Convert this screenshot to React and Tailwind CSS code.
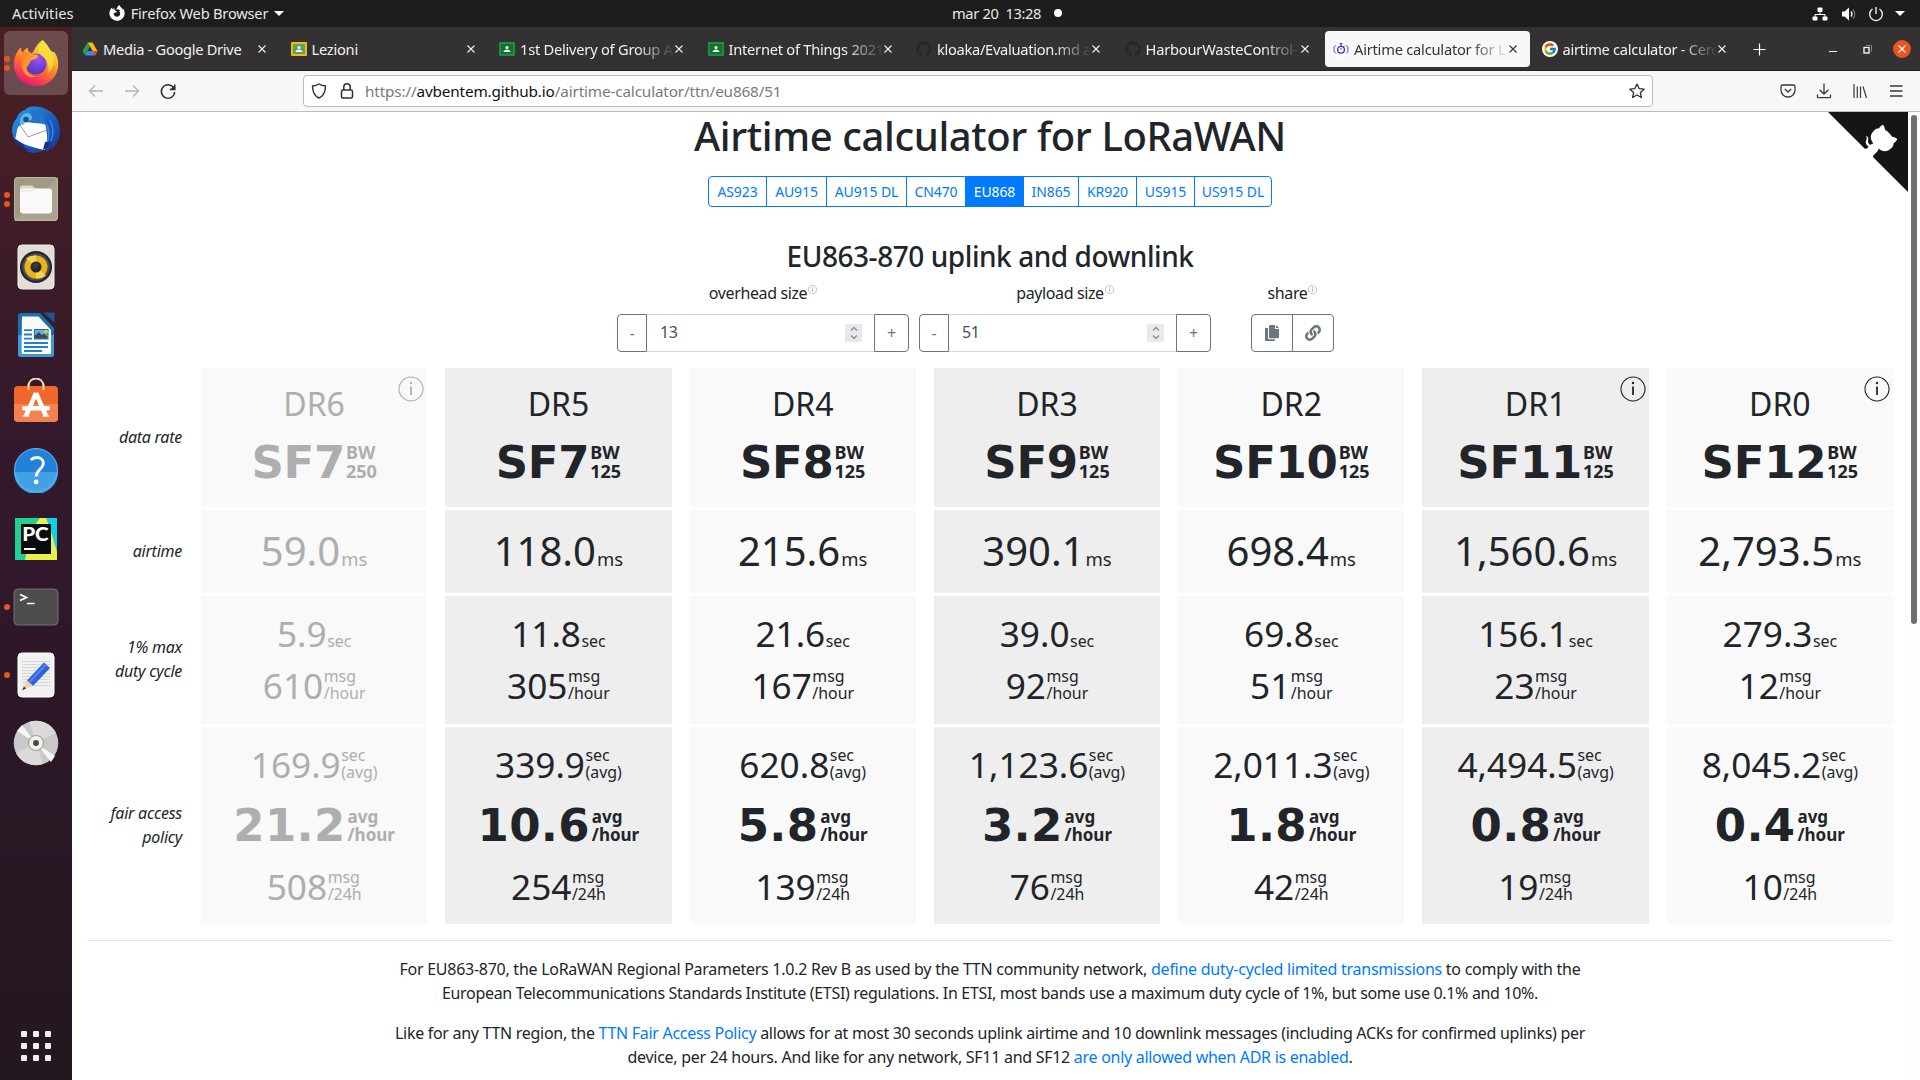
import React from 'react';
import { FcGoogle } from 'react-icons/fc';
import { FaGithub, FaFirefoxBrowser, FaLink } from 'react-icons/fa';

/* ---------- dock icons ---------- */

const FirefoxIcon = () => (
  <svg width="46" height="46" viewBox="0 0 46 46">
    <defs>
      <linearGradient id="ffBody" x1="0.8" y1="0" x2="0.3" y2="1">
        <stop offset="0" stopColor="#fff04a" />
        <stop offset="0.35" stopColor="#ffb524" />
        <stop offset="0.62" stopColor="#ff6a33" />
        <stop offset="1" stopColor="#e8107c" />
      </linearGradient>
      <radialGradient id="ffGlobe" cx="0.6" cy="0.25" r="0.8">
        <stop offset="0" stopColor="#a850f0" />
        <stop offset="0.6" stopColor="#6a3fd8" />
        <stop offset="1" stopColor="#4b3bb0" />
      </radialGradient>
      <linearGradient id="ffHead" x1="0" y1="0" x2="1" y2="0.6">
        <stop offset="0" stopColor="#ff7a2a" />
        <stop offset="1" stopColor="#ffb52e" />
      </linearGradient>
    </defs>
    <path d="M29.500 0C34 4 36 8 37.500 10.500 40 12 40.500 13 41.500 12c3 5 4 9 3.700 13.500C44.500 37.500 35 46 23.500 46 10.500 46 .8 36.500.8 24.500.8 17.500 3.500 11.500 8 7.500c0 2.200.5 3.800 1.500 5.300 1.500-2.500 3-4 5-5.300.3 3 1.200 5 3.500 6.500C22 12 21 6 29.500 0z" fill="url(#ffBody)" />
    <circle cx="23" cy="24" r="10.500" fill="url(#ffGlobe)" />
    <path d="M29.500 0C34 4 36 8 37.500 10.500 43 18 41 28 35 33c2-7-1-14-6-17-6-4-3-11 .5-16z" fill="#ffe23c" opacity="0.75" />
    <path d="M9 13c4-2.500 8-1.500 11 1.500 3-.5 5 .5 5 2-1 2.500-5 3-7 4-2 2-1 4-3.500 5.500-3 5 2 10 8.500 10.500C13 39 6 31 9 13z" fill="url(#ffHead)" />
  </svg>
);

const ThunderbirdIcon = () => (
  <svg width="50" height="50" viewBox="0 0 50 50">
    <defs>
      <linearGradient id="tbBody" x1="0" y1="0" x2="1" y2="1">
        <stop offset="0" stopColor="#2aa0ea" />
        <stop offset="0.5" stopColor="#1c62c4" />
        <stop offset="1" stopColor="#1b2f90" />
      </linearGradient>
    </defs>
    <path d="M14 4c2-2.500 5-3.500 8-3.500C38 0 49 11 49 25c0 9-5 16-9 19l1-4-6 7 .5-4C30 47 22 48 15 45l4-1C7 42 1 33 1 24c0-5 2-9 5-12 1-4 4-7 8-8z" fill="url(#tbBody)" />
    <path d="M13 16l22 2c-1 4 2 10 1 16l-2 10C24 42 10 38 4 33c2-4 1-8 3-12z" fill="#fff" />
    <path d="M9 19l8 12 19-7" fill="none" stroke="#9a9a9a" strokeWidth="1" />
    <path d="M9 18c-1-6 3-11 8-11 3 0 5 2 5 4 0 4-7 3-10 8z" fill="#5fb9ea" />
    <path d="M17 6c7-3 14 1 17 9l2 6-3-3c-5-2-9-2-13-2 2-4 1-7-3-10z" fill="#2473cc" />
    <circle cx="15" cy="13.500" r="2.800" fill="#1c4f7a" />
    <path d="M35 18c4 6 3 14 1 20M39 14c4 8 3 16 1 21" fill="none" stroke="#2b8fe0" strokeWidth="1.500" />
    <path d="M3 32c2 6 8 11 15 13-3-2-5-4-6-7z" fill="#1e2b86" />
    <path d="M34 36l-2 8c3-1 6-4 7-8z" fill="#1e2b86" />
  </svg>
);

const FilesIcon = () => (
  <svg width="46" height="46" viewBox="0 0 46 46">
    <rect x="1" y="1" width="44" height="44" rx="4" fill="#a09983" />
    <path d="M1 45L45 1v40a4 4 0 0 1-4 4z" fill="#aaa48f" />
    <rect x="1.500" y="1.500" width="43" height="43" rx="4" fill="none" stroke="#bdb8a6" />
    <path d="M7 12a2.500 2.500 0 0 1 2.500-2.500H19l4 3.500v5H7z" fill="#dcd9cc" />
    <rect x="7" y="12.500" width="32" height="25" rx="3" fill="#faf9f7" />
    <path d="M7 15h10c3 0 4-2.500 7-2.500" fill="none" stroke="#e4e1d6" strokeWidth="1" />
  </svg>
);

const RhythmboxIcon = () => (
  <svg width="38" height="46" viewBox="0 0 38 46">
    <rect x="1" y="1" width="36" height="44" rx="4" fill="#e2ded5" stroke="#f2efe9" />
    <circle cx="19" cy="23" r="16" fill="#23252e" />
    <circle cx="19" cy="23" r="13.800" fill="#494d5a" />
    <circle cx="19" cy="23" r="11.500" fill="#e8b417" />
    <path d="M19 23L9 14.500A13 13 0 0 1 19 11.500z" fill="#f7d548" />
    <path d="M19 23l10 8.500A13 13 0 0 1 19 34.500z" fill="#f7d548" />
    <circle cx="19" cy="23" r="5.500" fill="#26262a" />
    <circle cx="18.500" cy="21.500" r="3" fill="#3a3a3e" />
  </svg>
);

const WriterIcon = () => (
  <svg width="38" height="46" viewBox="0 0 38 46">
    <path d="M4 1h19l14 15v26a3 3 0 0 1-3 3H4a3 3 0 0 1-3-3V4a3 3 0 0 1 3-3z" fill="#1a6fae" />
    <path d="M1 23h36v19a3 3 0 0 1-3 3H4a3 3 0 0 1-3-3z" fill="#3c9bd6" />
    <path d="M5 4.500h16.500L34 18v22.500a1.500 1.500 0 0 1-1.500 1.500h-26A2 2 0 0 1 4.500 40z" fill="#fafafa" />
    <path d="M26 .5h11.500v10z" fill="#155a92" />
    <path d="M7 18.200h8M7 22.500h8M7 26.700h8M7 31h24M7 35h24M7 39h18" stroke="#2382c4" strokeWidth="1.800" />
    <rect x="17.500" y="17.500" width="13.500" height="9.500" fill="#5cb0e4" stroke="#1a6fae" />
    <path d="M18 26.500v-3l4-3.500 3 3 2-1.500 3.500 3v2z" fill="#44484c" />
    <circle cx="29" cy="19.500" r="1.800" fill="#f2d21c" />
  </svg>
);

const SoftwareIcon = () => (
  <svg className="-mt-0.5" width="46" height="48" viewBox="0 0 46 48">
    <path d="M15.500 14V8a7.500 7.500 0 0 1 15 0v6" fill="none" stroke="#f3dcb4" strokeWidth="1.800" />
    <rect x="1" y="8" width="44" height="36" rx="4" fill="#f0672c" />
    <path d="M1 26h44v14a4 4 0 0 1-4 4H5a4 4 0 0 1-4-4z" fill="#f48150" />
    <path d="M15.500 6v6M30.500 6v6" stroke="#f3dcb4" strokeWidth="1.800" />
    <path d="M23 15L13 38M23 15l10 23" stroke="#fff" strokeWidth="4.500" />
    <rect x="9" y="28" width="28" height="4.500" rx="2" fill="#fff" />
    <path d="M10 38h6M30 38h6" stroke="#fff" strokeWidth="1.500" />
  </svg>
);

const HelpIcon = () => (
  <svg className="-mt-0.5" width="46" height="46" viewBox="0 0 46 46">
    <circle cx="23" cy="23" r="22" fill="#2382d8" />
    <path d="M1 25a22 22 0 0 0 44 0z" fill="#42a0e6" />
    <circle cx="23" cy="23" r="21.500" fill="none" stroke="#6cbaf0" strokeWidth="0.800" />
    <path d="M17.800 13c1.800-1.800 3.800-2.500 6-2.500 4 0 6.500 2.500 6.500 5.800 0 6-7 6.200-7 12.700v.5" fill="none" stroke="#fff" strokeWidth="2.800" />
    <circle cx="23.200" cy="35" r="2.400" fill="#fff" />
  </svg>
);

const PyCharmIcon = () => (
  <svg width="42" height="42" viewBox="0 0 42 42">
    <rect width="42" height="42" fill="#23d18e" />
    <path d="M21 0h21v28z" fill="#12cfe4" />
    <path d="M25 0h6l11 28v14H10l6-30z" fill="#e8f04a" />
    <path d="M32 0h10v34z" fill="#12cfe4" />
    <path d="M0 28l10 14H0z" fill="#1fd0a0" />
    <rect x="6" y="6" width="30" height="30" fill="#0b0b0b" />
    <text x="7.200" y="23" fontFamily="Lato, sans-serif" fontWeight="900" fontSize="18" textLength="26.500" lengthAdjust="spacingAndGlyphs" fill="#fff">PC</text>
    <rect x="9" y="30" width="11.500" height="2" fill="#fff" />
  </svg>
);

const TerminalIcon = () => (
  <svg width="46" height="38" viewBox="0 0 46 38">
    <rect x="1" y="1" width="44" height="36" rx="4" fill="#4d4d4d" stroke="#737373" />
    <path d="M7 6.500l6.500 3L7 12.500" fill="none" stroke="#fff" strokeWidth="1.700" />
    <path d="M14 15.500h7.500" stroke="#fff" strokeWidth="1.500" />
  </svg>
);

const EditorIcon = () => (
  <svg width="38" height="46" viewBox="0 0 38 46">
    <rect x="1" y="1" width="36" height="44" rx="4" fill="#f1f1f1" stroke="#fff" />
    <path d="M5 9.500h28M5 12.500h28M5 15.500h28M5 18.500h28M5 21.500h28M5 24.500h28M5 27.500h28M5 30.500h28M5 33.500h28" stroke="#cfcfcf" strokeWidth="0.800" />
    <path d="M27 10.500l6 5.500L16 34l-6-5.500z" fill="#2f62d8" />
    <path d="M29 12.500L12 30.500" stroke="#5584ec" strokeWidth="2" />
    <path d="M10 28.500l6 5.500-10.500 4z" fill="#f5cfa6" />
    <path d="M7 34.500l2 2-4 1.800z" fill="#333" />
  </svg>
);

const DiscIcon = () => (
  <svg width="46" height="46" viewBox="0 0 46 46">
    <circle cx="23" cy="23" r="22.300" fill="#c9c9c9" />
    <path d="M23 23L16 2A22 22 0 0 1 43 13zM23 23l7 21A22 22 0 0 1 3 33z" fill="#dadada" />
    <path d="M23 23L4 11l5-6zM23 23l19 13-4 6z" fill="#f6f6f6" />
    <circle cx="23" cy="23" r="7.500" fill="#f3f1ea" stroke="#a9a38f" strokeWidth="1.200" />
    <circle cx="23" cy="23" r="3" fill="#4a4a4a" />
  </svg>
);

const dock = [
  { I: FirefoxIcon, dots: 2, active: true },
  { I: ThunderbirdIcon, dots: 0 },
  { I: FilesIcon, dots: 2 },
  { I: RhythmboxIcon, dots: 0 },
  { I: WriterIcon, dots: 0 },
  { I: SoftwareIcon, dots: 0 },
  { I: HelpIcon, dots: 0 },
  { I: PyCharmIcon, dots: 0 },
  { I: TerminalIcon, dots: 1 },
  { I: EditorIcon, dots: 1 },
  { I: DiscIcon, dots: 0 },
];

function Dock() {
  return (
    <div className="flex w-[72px] shrink-0 flex-col bg-linear-to-b from-[#4a2023] via-[#33182c] via-40% to-[#231720] pt-1">
      <div className="flex flex-col gap-1">
        {dock.map(({ I, dots, active }, i) => (
          <div key={i} className="relative flex h-16 items-center justify-center">
            <div className={active ? 'flex size-16 items-center justify-center rounded-md bg-white/20' : 'flex size-16 items-center justify-center'}>
              <I />
            </div>
            <div className="absolute top-0 left-1 flex h-16 flex-col justify-center gap-[3px]">
              {Array.from({ length: dots }, (_, d) => (
                <span key={d} className="size-[6px] rounded-full bg-[#e95420]" />
              ))}
            </div>
          </div>
        ))}
      </div>
      <div className="mt-auto mb-[19px] ml-[21px] grid w-[30px] grid-cols-3 gap-[6px]">
        {Array.from({ length: 9 }, (_, i) => (
          <span key={i} className="size-[6px] rounded-[1px] bg-[#efeeec]" />
        ))}
      </div>
    </div>
  );
}

/* ---------- GNOME top bar ---------- */

function TopBar() {
  return (
    <div className="grid h-[27px] shrink-0 grid-cols-3 items-center bg-[#1d1d1d] text-[14.67px] tracking-[-0.22px] text-[#e8e8e8]">
      <div className="-mt-px flex items-center pl-3">
        <span className="tracking-[0.06px]">Activities</span>
        <FaFirefoxBrowser className="ml-[35px] text-white" size={16} />
        <span className="ml-[6px]">Firefox Web Browser</span>
        <span className="ml-[6px] border-x-[5px] border-t-[5px] border-x-transparent border-t-white" />
      </div>
      <div className="-mt-0.5 flex items-center pl-[312px] whitespace-pre">
        <span className="tracking-[-0.35px]">mar 20  13:28</span>
        <span className="ml-[13px] size-2 rounded-full bg-white" />
      </div>
      <div className="flex items-center justify-end pr-[15px]">
        <svg width="16" height="16" viewBox="0 0 16 16" fill="#fff">
          <rect x="5.500" y="1.500" width="5" height="4.500" rx="1" />
          <rect x="0.500" y="10.500" width="5" height="4" rx="1" />
          <rect x="10.500" y="10.500" width="5" height="4" rx="1" />
          <path d="M8 5v3.500M3 11V8.500h10V11" stroke="#fff" fill="none" />
        </svg>
        <svg className="ml-[13px]" width="16" height="16" viewBox="0 0 16 16">
          <path d="M1 5.500h2.500L8 1.500v13l-4.500-4H1z" fill="#fff" />
          <path d="M10 5.500a4 4 0 0 1 0 5" fill="none" stroke="#fff" strokeWidth="1.300" />
          <path d="M12 3.500a6.500 6.500 0 0 1 0 9" fill="none" stroke="#777" strokeWidth="1.200" />
        </svg>
        <svg className="ml-[11px]" width="16" height="16" viewBox="0 0 16 16" fill="none" stroke="#fff" strokeWidth="1.300">
          <path d="M4.500 3a6.300 6.300 0 1 0 7 0M8 1v7" />
        </svg>
        <span className="ml-[11px] border-x-[5px] border-t-[5px] border-x-transparent border-t-white" />
      </div>
    </div>
  );
}

/* ---------- Firefox chrome ---------- */

const DriveIcon = () => (
  <svg width="16" height="16" viewBox="0 0 16 16">
    <path d="M5.500 1.500h5l5 8.500h-5z" fill="#fbbc05" />
    <path d="M5.500 10h10L13 14.500H3z" fill="#4285f4" />
    <path d="M15.500 10L13 14.500 10.500 10z" fill="#ea4335" />
    <path d="M5.500 1.500L8 5.800 3 14.500.5 10z" fill="#1ea352" />
    <path d="M5.600 10L8 5.800l2.500 4.200z" fill="#333131" />
  </svg>
);

function ClassroomIcon({ frame, board }) {
  return (
    <svg width="16" height="16" viewBox="0 0 16 16">
      <rect y="1" width="16" height="14" rx="1" fill={frame} />
      <rect x="2" y="3" width="12" height="10" fill={board} />
      <circle cx="8" cy="6.500" r="1.500" fill="#fff" />
      <path d="M4.500 11c.3-2 2-2.300 3.500-2.300s3.200.3 3.500 2.300z" fill="#fff" />
    </svg>
  );
}

const LoraIcon = () => (
  <span className="flex size-4 items-center justify-center rounded-full bg-white">
    <svg width="16" height="16" viewBox="0 0 16 16" fill="none" stroke="#2b2bd8">
      <circle cx="8" cy="8.700" r="3.400" strokeWidth="1.300" />
      <path d="M8 5.500V3M6.500 2.700h3M8 8.700V7M10.800 5.500l.8-.8" />
      <path d="M3 4a6 6 0 0 0 0 8.500M13 4a6 6 0 0 1 0 8.500" opacity="0.600" />
      <path d="M1.200 4.500a8 8 0 0 0 0 7.500M14.800 4.500a8 8 0 0 1 0 7.500" opacity="0.350" />
    </svg>
  </span>
);

const GoogleIcon = () => (
  <span className="flex size-4 items-center justify-center rounded-full bg-white">
    <FcGoogle size={14} />
  </span>
);

const GitHubTabIcon = () => <FaGithub size={16} color="#24292e" />;

const tabs = [
  { I: DriveIcon, t: 'Media - Google Drive', k: 'tracking-[-0.300px]' },
  { I: () => <ClassroomIcon frame="#f5b912" board="#57a360" />, t: 'Lezioni', k: 'tracking-[-0.250px]' },
  { I: () => <ClassroomIcon frame="#1d8f42" board="#13722f" />, t: '1st Delivery of Group A', k: 'tracking-[-0.240px]', fade: true },
  { I: () => <ClassroomIcon frame="#1d8f42" board="#13722f" />, t: 'Internet of Things 2021', k: 'tracking-[-0.250px]', fade: true },
  { I: GitHubTabIcon, t: 'kloaka/Evaluation.md a', k: 'tracking-[-0.300px]', fade: true },
  { I: GitHubTabIcon, t: 'HarbourWasteControl-', k: 'tracking-[-0.200px]', fade: true },
  { I: LoraIcon, t: 'Airtime calculator for L', k: 'tracking-[-0.220px]', fade: true, active: true },
  { I: GoogleIcon, t: 'airtime calculator - Cerc', k: 'tracking-[-0.300px]', fade: true },
];

const CloseX = () => (
  <svg className="shrink-0" width="8" height="8" viewBox="0 0 8 8" fill="none" stroke="currentColor" strokeWidth="1.100">
    <path d="M.5.5l7 7M7.500.5l-7 7" />
  </svg>
);

function TabBar() {
  return (
    <div className="flex h-11 shrink-0 border-b border-[#221f20] bg-[#333131] pt-1 pl-[2px] text-[14.67px] text-[#f2f2f2]">
      <div className="flex gap-1">
        {tabs.map(({ I, t, k, fade, active }, i) => (
          <div
            key={i}
            className={
              active
                ? 'flex h-9 w-[204.500px] items-center rounded bg-[#f8f8f8] pl-2 text-[#333333]'
                : 'flex h-9 w-[204.500px] items-center pl-2'
            }
          >
            <span className="size-4 shrink-0"><I /></span>
            <span
              className={
                fade
                  ? 'ml-[5px] w-[155px] overflow-hidden mask-r-from-75% mask-r-to-100% leading-9 whitespace-nowrap'
                  : 'ml-[5px] w-[155px] overflow-hidden leading-9 whitespace-nowrap'
              }
            >
              <span className={k}>{t}</span>
            </span>
            <CloseX />
          </div>
        ))}
      </div>
      <div className="ml-[15px] flex h-9 flex-1 items-center">
        <svg width="13" height="13" viewBox="0 0 13 13" stroke="#fff" strokeWidth="1.200">
          <path d="M6.500.5v12M.5 6.500h12" />
        </svg>
        <span className="mt-1 ml-[63px] h-px w-2 bg-white" />
        <svg className="ml-[26px]" width="9" height="9" viewBox="0 0 9 9" fill="none" stroke="#fff">
          <rect x="1" y="2.500" width="5" height="5.500" strokeWidth="1.300" />
          <path d="M3 .5h5.500v6" stroke="#9a9a9a" strokeWidth="0.800" />
        </svg>
        <span className="ml-[21px] flex size-[18px] items-center justify-center rounded-full bg-[#e95420] text-white">
          <CloseX />
        </span>
      </div>
    </div>
  );
}

function Arrow({ flip }) {
  return (
    <svg className={flip ? '-scale-x-100' : ''} width="16" height="16" viewBox="0 0 16 16" fill="none" stroke="#b4b4b4" strokeWidth="1.300">
      <path d="M15 8H1.500M7 2.500L1.500 8 7 13.500" />
    </svg>
  );
}

function Toolbar() {
  return (
    <div className="flex h-[41px] shrink-0 items-center border-b border-[#bcbcbc] bg-[#f7f7f7] pl-4 text-[#3a3a3a]">
      <Arrow />
      <span className="ml-5"><Arrow flip /></span>
      <svg className="ml-[19px]" width="18" height="18" viewBox="0 0 18 18" fill="none" stroke="#303030" strokeWidth="1.500">
        <path d="M15.300 7.200A6.700 6.700 0 1 0 15.700 10M15.800 2.500v5h-5" />
        <path d="M15.800 3v4.500h-4.500z" fill="#303030" stroke="none" />
      </svg>
      <div className="ml-[126px] flex h-8 w-[1350px] items-center rounded border border-[#bdbdbd] bg-white pr-[7px] pl-[7px]">
        <svg width="16" height="16" viewBox="0 0 16 16" fill="none" stroke="#303030" strokeWidth="1.400">
          <path d="M8 1c2 1.300 4 1.900 6.500 2 0 5.500-1 9.500-6.500 12C2.500 12.500 1.500 8.500 1.500 3 4 2.900 6 2.300 8 1z" />
        </svg>
        <svg className="ml-3" width="16" height="16" viewBox="0 0 16 16" fill="none" stroke="#303030" strokeWidth="1.500">
          <rect x="2.500" y="7" width="11" height="8" rx="1.500" />
          <path d="M4.800 7V4a3.200 3.200 0 0 1 6.400 0v3" />
        </svg>
        <span className="ml-[10px] text-[15.300px] tracking-[-0.150px] text-[#7a7a7a]">
          https://<span className="text-[#101010]">avbentem.github.io</span>/airtime-calculator/ttn/eu868/51
        </span>
        <svg className="ml-auto" width="16" height="16" viewBox="0 0 16 16" fill="none" stroke="#303030" strokeWidth="1.300" strokeLinejoin="round">
          <path d="M8 1l2.100 4.600 5 .6-3.700 3.400 1 4.900L8 12l-4.400 2.500 1-4.900L.9 6.200l5-.6z" />
        </svg>
      </div>
      <svg className="ml-[127px]" width="16" height="16" viewBox="0 0 16 16" fill="none" stroke="currentColor" strokeWidth="1.300">
        <path d="M2.500 2h11a1.500 1.500 0 0 1 1.500 1.500V7A7 7 0 0 1 1 7V3.500A1.500 1.500 0 0 1 2.500 2z" />
        <path d="M4.800 6L8 9l3.200-3" />
      </svg>
      <svg className="ml-5" width="16" height="16" viewBox="0 0 16 16" fill="none" stroke="currentColor" strokeWidth="1.300">
        <path d="M8 .5V11M3.500 6.800L8 11l4.500-4.200M1.500 11.500v2.200a1 1 0 0 0 1 1h11a1 1 0 0 0 1-1v-2.200" />
      </svg>
      <svg className="ml-5" width="16" height="16" viewBox="0 0 16 16" fill="none" stroke="currentColor" strokeWidth="1.200">
        <path d="M2 1v14M5.300 3.500V15M8.500 3.500V15M11 3.500L14.500 15" />
      </svg>
      <svg className="ml-5" width="16" height="16" viewBox="0 0 16 16" fill="none" stroke="currentColor" strokeWidth="1.300">
        <path d="M2 3h12.500M2 8h12.500M2 13h12.500" />
      </svg>
    </div>
  );
}

/* ---------- page ---------- */

const regions = [
  { t: 'AS923', w: 'w-[57px]' },
  { t: 'AU915', w: 'w-[60px]' },
  { t: 'AU915 DL', w: 'w-[80px]' },
  { t: 'CN470', w: 'w-[59px]' },
  { t: 'EU868', w: 'w-[58px]', active: true },
  { t: 'IN865', w: 'w-[55px]' },
  { t: 'KR920', w: 'w-[58px]' },
  { t: 'US915', w: 'w-[58px]' },
  { t: 'US915 DL', w: 'w-[77px]' },
];

function InfoBadge({ className, thin }) {
  return (
    <svg className={className} viewBox="0 0 26 26" fill="none" stroke="currentColor">
      <circle cx="13" cy="13" r="12" strokeWidth={thin ? 2.2 : 1.1} />
      <path d="M13 10.500V19" strokeWidth={thin ? 3 : 1.8} />
      <circle cx="13" cy="7" r={thin ? 1.6 : 1.2} fill="currentColor" stroke="none" />
    </svg>
  );
}

function FieldLabel({ children }) {
  return (
    <div className="flex h-6 justify-center leading-6 tracking-[-0.380px]">
      {children}
      <InfoBadge thin className="mt-1 ml-px size-[9px] text-[#b0b3b6]" />
    </div>
  );
}

function NumberField({ label, value }) {
  return (
    <div className="w-[292px]">
      <FieldLabel>{label}</FieldLabel>
      <div className="mt-[9px] flex h-[38px] text-[#6c757d]">
        <span className="flex w-[30px] items-center justify-center rounded-l border border-[#6c757d]">-</span>
        <div className="flex flex-1 items-center justify-between border-y border-[#ced4da] pr-3 pl-[13px] text-[#495057]">
          <span className="-mt-0.5 tracking-[-0.500px]">{value}</span>
          <span className="flex h-[18px] w-[17px] items-center justify-center bg-[#e9e9ed] text-[#8f8f9d]">
            <svg width="8" height="14" viewBox="0 0 8 14" fill="none" stroke="currentColor" strokeWidth="1.400">
              <path d="M1 4.500l3-3 3 3M1 9.500l3 3 3-3" />
            </svg>
          </span>
        </div>
        <span className="flex w-[35px] items-center justify-center rounded-r border border-[#6c757d]">+</span>
      </div>
    </div>
  );
}

const columns = [
  { dr: 'DR6', sf: 'SF7', bw: '250', air: '59.0', duty: '5.9', dutyMsg: '610', fair: '169.9', avg: '21.2', day: '508', muted: true, info: true },
  { dr: 'DR5', sf: 'SF7', bw: '125', air: '118.0', duty: '11.8', dutyMsg: '305', fair: '339.9', avg: '10.6', day: '254' },
  { dr: 'DR4', sf: 'SF8', bw: '125', air: '215.6', duty: '21.6', dutyMsg: '167', fair: '620.8', avg: '5.8', day: '139' },
  { dr: 'DR3', sf: 'SF9', bw: '125', air: '390.1', duty: '39.0', dutyMsg: '92', fair: '1,123.6', avg: '3.2', day: '76' },
  { dr: 'DR2', sf: 'SF10', bw: '125', air: '698.4', duty: '69.8', dutyMsg: '51', fair: '2,011.3', avg: '1.8', day: '42' },
  { dr: 'DR1', sf: 'SF11', bw: '125', air: '1,560.6', duty: '156.1', dutyMsg: '23', fair: '4,494.5', avg: '0.8', day: '19', info: true },
  { dr: 'DR0', sf: 'SF12', bw: '125', air: '2,793.5', duty: '279.3', dutyMsg: '12', fair: '8,045.2', avg: '0.4', day: '10', info: true },
];

function Bold({ value, top, bottom, unit, track }) {
  return (
    <div className="flex h-[52px] justify-center font-bold [align-items:last_baseline]">
      <span className={`font-['DejaVu_Sans'] text-[45px] leading-[52px] ${track}`}>{value}</span>
      <span className={unit}>
        {top}
        <br />
        {bottom}
      </span>
    </div>
  );
}

function Value({ value, top, bottom }) {
  return (
    <div className="flex h-10 justify-center [align-items:last_baseline]">
      <span className="text-[35.200px] leading-10">{value}</span>
      <span className="ml-[0.500px] text-[15.900px] leading-[17.500px]">
        {top && (
          <>
            {top}
            <br />
          </>
        )}
        {bottom}
      </span>
    </div>
  );
}

function Row({ label, height, children }) {
  return (
    <div className={`grid grid-cols-[96px_repeat(7,minmax(0,1fr))] gap-x-[18px] ${height}`}>
      <div className="flex items-center justify-end pr-px pb-[2px] text-right leading-6 tracking-[-0.250px] whitespace-pre italic">{label}</div>
      {columns.map((c, i) => (
        <div
          key={i}
          className={`relative ${i % 2 ? 'bg-[#eeeeee]' : 'bg-[#f9f9f9]'} ${c.muted ? 'text-[#aeaeae]' : 'text-[#212529]'}`}
        >
          {children(c)}
        </div>
      ))}
    </div>
  );
}

function Table() {
  return (
    <div className="mt-4 flex flex-col gap-[3px]">
      <Row label="data rate" height="h-[139px]">
        {(c) => (
          <>
            {c.info && <InfoBadge className="absolute top-2 right-[3px] size-[26px]" />}
            <div className="pt-4 text-center text-[32px] leading-10">{c.dr}</div>
            <div className="mt-[13px]">
              <Bold value={c.sf} top="BW" bottom={c.bw} track="tracking-[-0.300px]" unit="ml-[1px] text-[18px] leading-[19px]" />
            </div>
          </>
        )}
      </Row>
      <Row label="airtime" height="h-[83px]">
        {(c) => (
          <div className="flex items-baseline justify-center pt-[17px]">
            <span className="text-[40px] leading-[48px]">{c.air}</span>
            <span className="ml-[1px] text-[18.500px]">ms</span>
          </div>
        )}
      </Row>
      <Row label={'1% max\nduty cycle'} height="h-[128px]">
        {(c) => (
          <div className="flex flex-col gap-3 pt-[17px]">
            <Value value={c.duty} bottom="sec" />
            <Value value={c.dutyMsg} top="msg" bottom="/hour" />
          </div>
        )}
      </Row>
      <Row label={'fair access\npolicy'} height="h-[197px]">
        {(c) => (
          <div className="pt-[17px]">
            <Value value={c.fair} top="sec" bottom="(avg)" />
            <div className="mt-4 mb-[14px]">
              <Bold value={c.avg} top="avg" bottom="/hour" track="tracking-[0.300px]" unit="ml-[2px] text-[17px] leading-[18px]" />
            </div>
            <Value value={c.day} top="msg" bottom="/24h" />
          </div>
        )}
      </Row>
    </div>
  );
}

function GitHubCorner() {
  return (
    <svg className="absolute top-0 right-3" width="80" height="80" viewBox="0 0 250 250" fill="#151513">
      <path d="M0,0 L115,115 L130,115 L142,142 L250,250 L250,0 Z" />
      <path fill="#fff" d="M128.3,109.0 C113.8,99.7 119.0,89.6 119.0,89.6 C122.0,82.7 120.5,78.6 120.5,78.6 C119.2,72.0 123.4,76.3 123.4,76.3 C127.3,80.9 125.5,87.3 125.5,87.3 C122.9,97.6 130.6,101.9 134.4,103.2" />
      <path fill="#fff" d="M115.0,115.0 C114.9,115.1 118.7,116.5 119.8,115.4 L133.7,101.6 C136.9,99.2 139.9,98.4 142.2,98.6 C133.8,88.0 127.5,74.4 143.8,58.0 C148.5,53.4 154.0,51.2 159.7,51.0 C160.3,49.4 163.2,43.6 171.4,40.1 C171.4,40.1 176.1,42.5 178.8,56.2 C183.1,58.6 187.2,61.8 190.9,65.4 C194.5,69.0 197.7,73.2 200.1,77.6 C213.8,80.2 216.3,84.9 216.3,84.9 C212.7,93.1 206.9,96.0 205.4,96.6 C205.1,102.4 203.0,107.8 198.3,112.5 C181.9,128.9 168.3,122.5 157.7,114.1 C157.9,116.9 156.7,120.9 152.7,124.9 L141.0,136.5 C139.8,137.7 141.6,141.9 141.8,141.8 Z" />
    </svg>
  );
}

const Link = ({ children }) => <span className="text-[#007bff]">{children}</span>;

function Page() {
  return (
    <div className="relative flex flex-1 overflow-hidden bg-white text-base text-[#212529]">
      <GitHubCorner />
      <div className="flex w-[1836px] flex-col px-[15px]">
        <h1 className="h-12 text-center text-[40px] leading-[48px] font-medium tracking-[-0.380px]">Airtime calculator for LoRaWAN</h1>
        <div className="mt-4 flex h-[31px] justify-center">
          <div className="flex overflow-hidden rounded-[4px] border border-[#007bff] text-sm tracking-[-0.100px] text-[#007bff]">
            {regions.map((r, i) => (
              <span
                key={r.t}
                className={`flex items-center justify-center ${r.w} ${i ? 'border-l border-[#007bff]' : ''} ${r.active ? 'bg-[#007bff] text-white' : ''}`}
              >
                {r.t}
              </span>
            ))}
          </div>
        </div>
        <h2 className="mt-8 h-[34px] text-center text-[28px] leading-[34px] font-medium tracking-[-0.440px]">EU863-870 uplink and downlink</h2>
        <div className="mt-2 ml-[530px] flex">
          <NumberField label="overhead size" value="13" />
          <div className="ml-[10px]">
            <NumberField label="payload size" value="51" />
          </div>
          <div className="ml-10 w-[83px]">
            <FieldLabel>share</FieldLabel>
            <div className="mt-[9px] flex h-[38px] rounded border border-[#6c757d] text-[#6c757d]">
              <span className="flex flex-1 items-center justify-center border-r border-[#6c757d]">
                <svg width="14" height="16" viewBox="0 0 14 16" fill="currentColor">
                  <path d="M3 3H1a1 1 0 0 0-1 1v11a1 1 0 0 0 1 1h8a1 1 0 0 0 1-1v-.7H4.500A1.500 1.500 0 0 1 3 12.800z" />
                  <path d="M5 0h5v4h4v8.300a1 1 0 0 1-1 1H5a1 1 0 0 1-1-1V1a1 1 0 0 1 1-1z" />
                  <path d="M11 0l3 3h-3z" />
                </svg>
              </span>
              <span className="flex flex-1 items-center justify-center">
                <FaLink size={16} />
              </span>
            </div>
          </div>
        </div>
        <Table />
        <div className="mt-4 h-px bg-[#e5e5e5]" />
        <div className="mt-4 text-center leading-6 whitespace-nowrap">
          <p className="tracking-[-0.267px]">
            For EU863-870, the LoRaWAN Regional Parameters 1.0.2 Rev B as used by the TTN community network,{' '}
            <Link>define duty-cycled limited transmissions</Link> to comply with the
          </p>
          <p className="tracking-[-0.324px]">
            European Telecommunications Standards Institute (ETSI) regulations. In ETSI, most bands use a maximum duty cycle of 1%, but some use 0.1% and 10%.
          </p>
          <p className="mt-4 tracking-[-0.290px]">
            Like for any TTN region, the <Link>TTN Fair Access Policy</Link> allows for at most 30 seconds uplink airtime and 10 downlink messages (including ACKs for confirmed uplinks) per
          </p>
          <p className="tracking-[-0.285px]">
            device, per 24 hours. And like for any network, SF11 and SF12 <Link>are only allowed when ADR is enabled</Link>.
          </p>
        </div>
      </div>
      <div className="w-3 bg-[#fdfdfd] pt-[3px] pl-[3px]">
        <div className="h-[509px] w-[6px] rounded-full bg-[#6f6f6f]" />
      </div>
    </div>
  );
}

export default function App() {
  return (
    <div className="flex h-[1080px] w-[1920px] flex-col overflow-hidden font-['Noto_Sans',sans-serif]">
      <TopBar />
      <div className="flex min-h-0 flex-1">
        <Dock />
        <div className="flex min-w-0 flex-1 flex-col">
          <TabBar />
          <Toolbar />
          <Page />
        </div>
      </div>
    </div>
  );
}
